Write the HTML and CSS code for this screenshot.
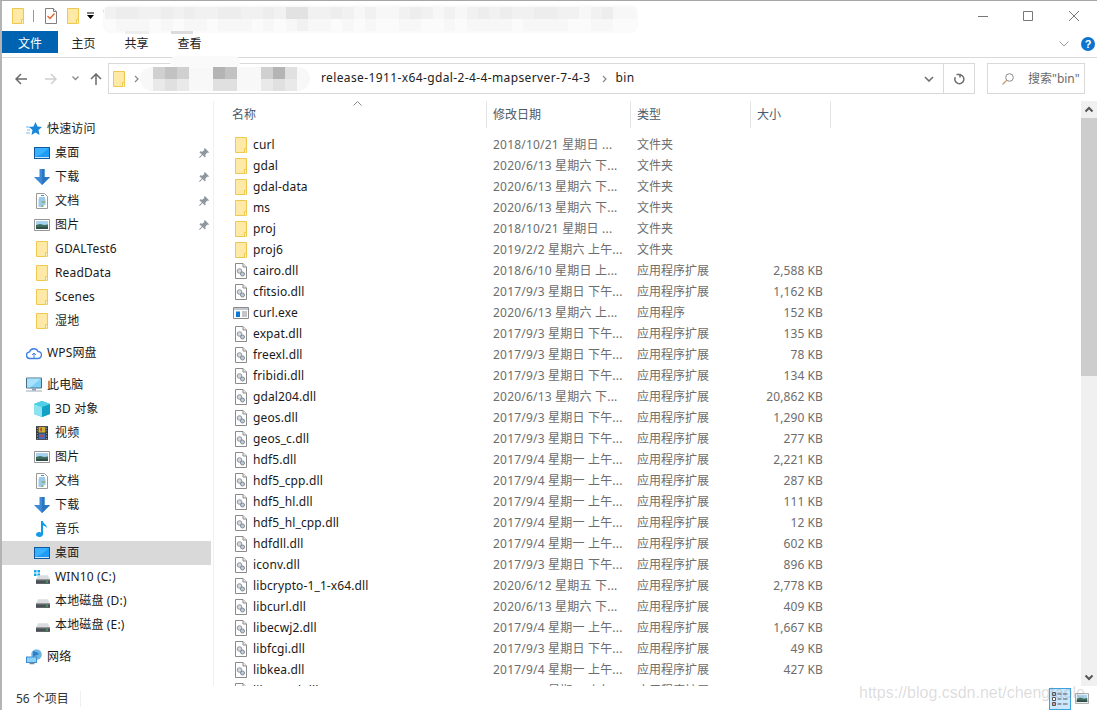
FILE: index.html
```html
<!DOCTYPE html>
<html lang="zh">
<head>
<meta charset="utf-8">
<title>bin</title>
<link rel="stylesheet" href="styles.css">
</head>
<body>
<svg class="defs" width="0" height="0">
  <symbol id="folder" viewBox="0 0 12 16"><path d="M.5.5h11v15H.5z" fill="#fee69a" stroke="#eec84f"/><path d="M1 1h9v14H1z" fill="#fee9a6"/><path d="M9.5 15.5v-4h2v4" fill="#fff3c8" stroke="#eec84f"/></symbol>
  <symbol id="dll" viewBox="0 0 12 16"><path d="M.5.5h7.5l3.5 3.5v11.5H.5z" fill="#fff" stroke="#8a8a8a"/><path d="M8 .5v3.5h3.5" fill="#eee" stroke="#8a8a8a"/><circle cx="4.5" cy="8" r="2.3" fill="#d5d9de" stroke="#8b97a3"/><circle cx="7.5" cy="11" r="2" fill="#c4ccd4" stroke="#7d8a96"/></symbol>
  <symbol id="exe" viewBox="0 0 16 12"><path d="M.5.5h15v11H.5z" fill="#fff" stroke="#8b8b8b"/><path d="M1 1h14v2H1z" fill="#c3c8cf"/><path d="M3 4.5h4v5.5H3z" fill="#0a78d7"/><path d="M9 5h5M9 7h5M9 9h5" stroke="#8b8b8b"/></symbol>
  <symbol id="desktop" viewBox="0 0 16 12"><path d="M0 0h16v12H0z" fill="#11599c"/><path d="M1 1h14v9H1z" fill="#1e9bf5"/><path d="M1 1h14L8 7 1 10z" fill="#39b1ff"/><path d="M1 10.5h14" stroke="#c9e8fb"/></symbol>
  <symbol id="down" viewBox="0 0 16 16"><path d="M5.500 0h5v8H16l-8 8-8-8h5.500z" fill="#3a8ad6"/><path d="M8 0h2.500v8H16l-8 8z" fill="#2a76c0"/></symbol>
  <symbol id="doc" viewBox="0 0 12 16"><path d="M.5.5h8l3 3v12H.5z" fill="#fff" stroke="#9a9a9a"/><path d="M5 2.500h3M3 5h6M2.500 7h7M2.500 9h7M2.500 11h7M2.500 13h5" stroke="#3c93cc"/><path d="M5.500 9h4M5.500 13h2" stroke="#6ba84a"/></symbol>
  <symbol id="pic" viewBox="0 0 16 12"><path d="M.5.5h15v11H.5z" fill="#fff" stroke="#969696"/><path d="M2 2h12v4H2z" fill="#a8d2ee"/><path d="M2 6l4-1 4 1 4-.5V10H2z" fill="#3f6d5c"/><path d="M2 8h12v2H2z" fill="#2f4f4a"/></symbol>
  <symbol id="star" viewBox="0 0 16 16"><path d="M9.500 1l2 4.500 4.500.5-3.500 3 1 5-4-2.500-4 2.500 1-5L3 6l4.500-.5z" fill="#1a86d9"/><path d="M0 6h4M1 9h3M0 12h4" stroke="#6dbcf2"/></symbol>
  <symbol id="cloud" viewBox="0 0 16 14"><path d="M4 12.500a3.300 3.300 0 0 1-.4-6.600A4.500 4.500 0 0 1 12 5.500a3.500 3.500 0 0 1 0 7z" fill="#fff" stroke="#3f7fe8" stroke-width="1.400"/><path d="M8 12V7M6 9l2-2 2 2" fill="none" stroke="#3f7fe8"/></symbol>
  <symbol id="pc" viewBox="0 0 16 15"><path d="M.5.500h15v10H.5z" fill="#7fd0f7" stroke="#4a6c87"/><path d="M1 1h14L4 10H1z" fill="#a8e2fb"/><path d="M6 11h4v2H6z" fill="#8aa0b2"/><path d="M0 13.500h16" stroke="#9aabb9"/></symbol>
  <symbol id="cube" viewBox="0 0 16 16"><path d="M8 0l8 3v10l-8 3-8-3V3z" fill="#29b6d6"/><path d="M8 6l8-3v10l-8 3z" fill="#12a0c4"/><path d="M0 3l8 3v10l-8-3z" fill="#8be3f0"/><path d="M8 0l8 3-8 3-8-3z" fill="#4fd0e6"/></symbol>
  <symbol id="film" viewBox="0 0 14 16"><path d="M0 0h14v16H0z" fill="#2f3337"/><path d="M3 1h8v6.500H3z" fill="#c8b13b"/><path d="M3 8.500h8V15H3z" fill="#3c6fc6"/><path d="M5 2h2v4H5zM5 10h3v3H5z" fill="#c5452f"/><path d="M1 2h1v1H1zm0 3h1v1H1zm0 3h1v1H1zm0 3h1v1H1zm0 3h1v1H1zm11-12h1v1h-1zm0 3h1v1h-1zm0 3h1v1h-1zm0 3h1v1h-1zm0 3h1v1h-1z" fill="#ddd"/></symbol>
  <symbol id="note" viewBox="0 0 12 16"><path d="M5 0h1.800c.3 3 4.200 3.500 4.200 7-1-1.500-2.700-2.300-4-2.500V13c0 1.800-1.500 3-3.500 3S0 15 0 13.500 1.500 11 3 11c.8 0 1.500.2 2 .5z" fill="#0f9be8"/></symbol>
  <symbol id="drive" viewBox="0 0 16 10"><path d="M2.500 0h11L16 5H0z" fill="#d9dde0"/><path d="M0 5h16v5H0z" fill="#4a5056"/><path d="M0 5h16v1H0z" fill="#8a9096"/><path d="M11.500 7h2v1.500h-2z" fill="#3fd05a"/></symbol>
  <symbol id="win" viewBox="0 0 6 6"><path d="M0 0h2.500v2.500H0zM3.500 0H6v2.500H3.500zM0 3.500h2.500V6H0zM3.500 3.500H6V6H3.500z" fill="#12a4ec"/></symbol>
  <symbol id="net" viewBox="0 0 16 16"><circle cx="10.500" cy="5.500" r="5.300" fill="#6fb4e6"/><path d="M7 2c2 1 4 .5 6 3-2 2-5 1-6 3z" fill="#2f7ec0"/><path d="M0 7.500h11V14H0z" fill="#3d8fd1"/><path d="M1 8.500h9V13H1z" fill="#8bd2f6"/><path d="M3.500 14.500h5" stroke="#6f8ba3" stroke-width="1.500"/></symbol>
  <symbol id="pin" viewBox="0 0 12 12"><path d="M7 0l5 5-1 1-1-.5L7.500 8 8 10.500 7 11.500 4.200 8.500 1 12 0 11l3.500-3.200L.5 5l1-1L4 4.500 6.500 2 6 1z" fill="#8e979f"/></symbol>
</svg>

<div class="watermark">https://blog.csdn.net/chengtaole</div>

<div class="window">
  <header class="titlebar">
    <div class="qat">
      <svg class="i12"><use href="#folder"/></svg>
      <span class="qat-sep"></span>
      <svg class="i12 qat-doc" viewBox="0 0 12 16"><path d="M.5.500h8l3 3v12H.5z" fill="#fff" stroke="#7f7f7f"/><path d="M8.500.5v3h3" fill="#eee" stroke="#7f7f7f"/><path d="M2.500 8l2.500 2.500 4.500-5" fill="none" stroke="#e8612c" stroke-width="1.400"/></svg>
      <svg class="i12 qat-folder"><use href="#folder"/></svg>
      <svg class="qat-arrow" viewBox="0 0 9 8"><path d="M1 1h7" stroke="#000"/><path d="M1 3h7L4.500 7z" fill="#000"/></svg>
      <span class="qat-sep last"></span>
    </div>
    <div class="winctl">
      <svg viewBox="0 0 10 10"><path d="M0 5.500h10" stroke="#777"/></svg>
      <svg viewBox="0 0 10 10"><path d="M.5.500h9v9h-9z" fill="none" stroke="#777"/></svg>
      <svg viewBox="0 0 10 10"><path d="M0 0l10 10M10 0L0 10" stroke="#777"/></svg>
    </div>
  </header>

  <nav class="ribbon">
    <span class="tab active">文件</span>
    <span class="tab">主页</span>
    <span class="tab">共享</span>
    <span class="tab">查看</span>
    <svg class="ribbon-chev" viewBox="0 0 10 6"><path d="M.5.500L5 5 9.500.5" fill="none" stroke="#9a9a9a"/></svg>
    <span class="help">?</span>
  </nav>

  <div class="navbar">
    <div class="navbtns">
      <svg class="nav-back" viewBox="0 0 12 12"><path d="M6 1L1 6l5 5M1 6h11" fill="none" stroke="#6a6a6a" stroke-width="1.500"/></svg>
      <svg class="nav-fwd" viewBox="0 0 12 12"><path d="M6 1l5 5-5 5M11 6H0" fill="none" stroke="#cfcfcf" stroke-width="1.500"/></svg>
      <svg class="nav-hist" viewBox="0 0 7 5"><path d="M.5.500L3.500 3.500 6.500.5" fill="none" stroke="#8a8a8a" stroke-width="1.300"/></svg>
      <svg class="nav-up" viewBox="0 0 12 12"><path d="M1 6l5-5 5 5M6 1v11" fill="none" stroke="#6a6a6a" stroke-width="1.500"/></svg>
    </div>
    <div class="address">
      <svg class="i12"><use href="#folder"/></svg>
      <svg class="crumb-chev first" viewBox="0 0 5 8"><path d="M1 1l3 3-3 3" fill="none" stroke="#888" stroke-width="1.200"/></svg>
      <span class="crumb">release-1911-x64-gdal-2-4-4-mapserver-7-4-3</span>
      <svg class="crumb-chev mid" viewBox="0 0 5 8"><path d="M1 1l3 3-3 3" fill="none" stroke="#888" stroke-width="1.200"/></svg>
      <span class="crumb last">bin</span>
      <svg class="addr-chev" viewBox="0 0 10 6"><path d="M1 1l4 4 4-4" fill="none" stroke="#6f6f6f" stroke-width="1.600"/></svg>
      <span class="refresh">
        <svg viewBox="0 0 12 12"><path d="M3.500 1.500h3.500v3M7 1.700a4.500 4.500 0 1 1-4.700 2.500" fill="none" stroke="#6f6f6f" stroke-width="1.500"/></svg>
      </span>
    </div>
    <div class="search">
      <svg viewBox="0 0 12 12"><circle cx="7.500" cy="4.500" r="3.800" fill="none" stroke="#8a8a8a"/><path d="M4.800 7.200L.5 11.500" stroke="#c79a73" stroke-width="1.200"/></svg>
      <span>搜索"bin"</span>
    </div>
  </div>

  <main class="main">
    <aside class="sidebar">
      <section class="navgroup">
        <div class="navrow top"><svg class="ni"><use href="#star"/></svg>快速访问</div>
        <div class="navrow"><svg class="ni short"><use href="#desktop"/></svg>桌面<svg class="pin"><use href="#pin"/></svg></div>
        <div class="navrow"><svg class="ni"><use href="#down"/></svg>下载<svg class="pin"><use href="#pin"/></svg></div>
        <div class="navrow"><svg class="ni narrow"><use href="#doc"/></svg>文档<svg class="pin"><use href="#pin"/></svg></div>
        <div class="navrow"><svg class="ni short"><use href="#pic"/></svg>图片<svg class="pin"><use href="#pin"/></svg></div>
        <div class="navrow"><svg class="ni narrow"><use href="#folder"/></svg>GDALTest6</div>
        <div class="navrow"><svg class="ni narrow"><use href="#folder"/></svg>ReadData</div>
        <div class="navrow"><svg class="ni narrow"><use href="#folder"/></svg>Scenes</div>
        <div class="navrow"><svg class="ni narrow"><use href="#folder"/></svg>湿地</div>
      </section>
      <section class="navgroup">
        <div class="navrow top"><svg class="ni"><use href="#cloud"/></svg>WPS网盘</div>
      </section>
      <section class="navgroup">
        <div class="navrow top"><svg class="ni"><use href="#pc"/></svg>此电脑</div>
        <div class="navrow"><svg class="ni"><use href="#cube"/></svg>3D 对象</div>
        <div class="navrow"><svg class="ni narrow"><use href="#film"/></svg>视频</div>
        <div class="navrow"><svg class="ni short"><use href="#pic"/></svg>图片</div>
        <div class="navrow"><svg class="ni narrow"><use href="#doc"/></svg>文档</div>
        <div class="navrow"><svg class="ni"><use href="#down"/></svg>下载</div>
        <div class="navrow"><svg class="ni narrow"><use href="#note"/></svg>音乐</div>
        <div class="navrow selected"><svg class="ni short"><use href="#desktop"/></svg>桌面</div>
        <div class="navrow"><span class="drive-wrap"><svg class="win"><use href="#win"/></svg><svg class="drv"><use href="#drive"/></svg></span>WIN10 (C:)</div>
        <div class="navrow"><span class="drive-wrap"><svg class="drv"><use href="#drive"/></svg></span>本地磁盘 (D:)</div>
        <div class="navrow"><span class="drive-wrap"><svg class="drv"><use href="#drive"/></svg></span>本地磁盘 (E:)</div>
      </section>
      <section class="navgroup">
        <div class="navrow top"><svg class="ni"><use href="#net"/></svg>网络</div>
      </section>
    </aside>

    <section class="files">
      <div class="fhead">
        <span class="fh name">名称</span>
        <span class="fh">修改日期</span>
        <span class="fh">类型</span>
        <span class="fh">大小</span>
        <svg class="sort" viewBox="0 0 9 5"><path d="M.5 4.500L4.500.5l4 4" fill="none" stroke="#8a8a8a"/></svg>
      </div>
      <div class="frows">
        <div class="row"><span class="n"><svg class="fi"><use href="#folder"/></svg>curl</span><span class="d">2018/10/21 星期日 ...</span><span class="t">文件夹</span><span class="s"></span></div>
        <div class="row"><span class="n"><svg class="fi"><use href="#folder"/></svg>gdal</span><span class="d">2020/6/13 星期六 下...</span><span class="t">文件夹</span><span class="s"></span></div>
        <div class="row"><span class="n"><svg class="fi"><use href="#folder"/></svg>gdal-data</span><span class="d">2020/6/13 星期六 下...</span><span class="t">文件夹</span><span class="s"></span></div>
        <div class="row"><span class="n"><svg class="fi"><use href="#folder"/></svg>ms</span><span class="d">2020/6/13 星期六 下...</span><span class="t">文件夹</span><span class="s"></span></div>
        <div class="row"><span class="n"><svg class="fi"><use href="#folder"/></svg>proj</span><span class="d">2018/10/21 星期日 ...</span><span class="t">文件夹</span><span class="s"></span></div>
        <div class="row"><span class="n"><svg class="fi"><use href="#folder"/></svg>proj6</span><span class="d">2019/2/2 星期六 上午...</span><span class="t">文件夹</span><span class="s"></span></div>
        <div class="row"><span class="n"><svg class="fi"><use href="#dll"/></svg>cairo.dll</span><span class="d">2018/6/10 星期日 上...</span><span class="t">应用程序扩展</span><span class="s">2,588 KB</span></div>
        <div class="row"><span class="n"><svg class="fi"><use href="#dll"/></svg>cfitsio.dll</span><span class="d">2017/9/3 星期日 下午...</span><span class="t">应用程序扩展</span><span class="s">1,162 KB</span></div>
        <div class="row"><span class="n"><svg class="fi wide"><use href="#exe"/></svg>curl.exe</span><span class="d">2020/6/13 星期六 上...</span><span class="t">应用程序</span><span class="s">152 KB</span></div>
        <div class="row"><span class="n"><svg class="fi"><use href="#dll"/></svg>expat.dll</span><span class="d">2017/9/3 星期日 下午...</span><span class="t">应用程序扩展</span><span class="s">135 KB</span></div>
        <div class="row"><span class="n"><svg class="fi"><use href="#dll"/></svg>freexl.dll</span><span class="d">2017/9/3 星期日 下午...</span><span class="t">应用程序扩展</span><span class="s">78 KB</span></div>
        <div class="row"><span class="n"><svg class="fi"><use href="#dll"/></svg>fribidi.dll</span><span class="d">2017/9/3 星期日 下午...</span><span class="t">应用程序扩展</span><span class="s">134 KB</span></div>
        <div class="row"><span class="n"><svg class="fi"><use href="#dll"/></svg>gdal204.dll</span><span class="d">2020/6/13 星期六 下...</span><span class="t">应用程序扩展</span><span class="s">20,862 KB</span></div>
        <div class="row"><span class="n"><svg class="fi"><use href="#dll"/></svg>geos.dll</span><span class="d">2017/9/3 星期日 下午...</span><span class="t">应用程序扩展</span><span class="s">1,290 KB</span></div>
        <div class="row"><span class="n"><svg class="fi"><use href="#dll"/></svg>geos_c.dll</span><span class="d">2017/9/3 星期日 下午...</span><span class="t">应用程序扩展</span><span class="s">277 KB</span></div>
        <div class="row"><span class="n"><svg class="fi"><use href="#dll"/></svg>hdf5.dll</span><span class="d">2017/9/4 星期一 上午...</span><span class="t">应用程序扩展</span><span class="s">2,221 KB</span></div>
        <div class="row"><span class="n"><svg class="fi"><use href="#dll"/></svg>hdf5_cpp.dll</span><span class="d">2017/9/4 星期一 上午...</span><span class="t">应用程序扩展</span><span class="s">287 KB</span></div>
        <div class="row"><span class="n"><svg class="fi"><use href="#dll"/></svg>hdf5_hl.dll</span><span class="d">2017/9/4 星期一 上午...</span><span class="t">应用程序扩展</span><span class="s">111 KB</span></div>
        <div class="row"><span class="n"><svg class="fi"><use href="#dll"/></svg>hdf5_hl_cpp.dll</span><span class="d">2017/9/4 星期一 上午...</span><span class="t">应用程序扩展</span><span class="s">12 KB</span></div>
        <div class="row"><span class="n"><svg class="fi"><use href="#dll"/></svg>hdfdll.dll</span><span class="d">2017/9/4 星期一 上午...</span><span class="t">应用程序扩展</span><span class="s">602 KB</span></div>
        <div class="row"><span class="n"><svg class="fi"><use href="#dll"/></svg>iconv.dll</span><span class="d">2017/9/3 星期日 下午...</span><span class="t">应用程序扩展</span><span class="s">896 KB</span></div>
        <div class="row"><span class="n"><svg class="fi"><use href="#dll"/></svg>libcrypto-1_1-x64.dll</span><span class="d">2020/6/12 星期五 下...</span><span class="t">应用程序扩展</span><span class="s">2,778 KB</span></div>
        <div class="row"><span class="n"><svg class="fi"><use href="#dll"/></svg>libcurl.dll</span><span class="d">2020/6/13 星期六 下...</span><span class="t">应用程序扩展</span><span class="s">409 KB</span></div>
        <div class="row"><span class="n"><svg class="fi"><use href="#dll"/></svg>libecwj2.dll</span><span class="d">2017/9/4 星期一 上午...</span><span class="t">应用程序扩展</span><span class="s">1,667 KB</span></div>
        <div class="row"><span class="n"><svg class="fi"><use href="#dll"/></svg>libfcgi.dll</span><span class="d">2017/9/3 星期日 下午...</span><span class="t">应用程序扩展</span><span class="s">49 KB</span></div>
        <div class="row"><span class="n"><svg class="fi"><use href="#dll"/></svg>libkea.dll</span><span class="d">2017/9/4 星期一 上午...</span><span class="t">应用程序扩展</span><span class="s">427 KB</span></div>
        <div class="row"><span class="n"><svg class="fi"><use href="#dll"/></svg>libmysql.dll</span><span class="d">2017/9/4 星期一 上午...</span><span class="t">应用程序扩展</span><span class="s">1,640 KB</span></div>
      </div>
    </section>

    <div class="scrollbar">
      <svg class="sb-btn" viewBox="0 0 16 17"><path d="M4.500 10.500L8 7l3.500 3.500" fill="none" stroke="#555" stroke-width="2"/></svg>
      <div class="sb-thumb"></div>
      <div class="sb-track"></div>
      <svg class="sb-btn" viewBox="0 0 16 17"><path d="M4.500 6.500L8 10l3.500-3.500" fill="none" stroke="#555" stroke-width="2"/></svg>
    </div>
  </main>

  <footer class="status">
    <span class="count">56 个项目</span>
    <span class="st-sep"></span>
    <span class="viewbtn on">
      <svg viewBox="0 0 16 16"><path d="M.5 1.500h3v3h-3zM.5 6.500h3v3h-3zM.5 11.500h3v3h-3z" fill="#fff" stroke="#555"/><path d="M1 2.500h2v1H1z" fill="#4a7fb5"/><path d="M1 12.500h2v1H1z" fill="#c0392b"/><path d="M5.500 3h4M11 3h4.500M5.500 8h4M11 8h4.500M5.500 13h4M11 13h4.500" stroke="#555"/></svg>
    </span>
    <svg class="viewbtn2"><use href="#pic"/></svg>
  </footer>
</div>

<div class="smudge title-smudge">
  <i class="g2"></i><i class="g3"></i><i class="g3"></i><i class="g2"></i><i class="g2"></i><i class="g3"></i><i class="g2"></i><i class="g3"></i><i class="g2"></i><i class="g2"></i><i class="g3"></i><i class="g3"></i><i class="g2"></i><i class="g2"></i><i class="g3"></i><i class="g2"></i><i class="g4"></i><i class="g4"></i><i class="g2"></i><i class="g2"></i><i class="g3"></i><i class="g2"></i><i class="g1"></i><i class="g2"></i><i class="g1"></i><i class="g1"></i><i class="g2"></i><i class="g3"></i><i class="g2"></i><i class="g1"></i><i class="g2"></i><i class="g1"></i><i class="g2"></i><i class="g3"></i><i class="g2"></i><i class="g3"></i><i class="g2"></i><i class="g2"></i><i class="g3"></i><i class="g3"></i><i class="g2"></i><i class="g2"></i><i class="g1"></i><i class="g2"></i><i class="g3"></i><i class="g1"></i><i class="g1"></i>
  <i class="g0"></i><i class="g1"></i><i class="g1"></i><i class="g1"></i><i class="g0"></i><i class="g1"></i><i class="g0"></i><i class="g1"></i><i class="g1"></i><i class="g0"></i><i class="g1"></i><i class="g1"></i><i class="g1"></i><i class="g0"></i><i class="g1"></i><i class="g0"></i><i class="g1"></i><i class="g2"></i><i class="g1"></i><i class="g1"></i><i class="g0"></i><i class="g1"></i><i class="g0"></i><i class="g1"></i><i class="g0"></i><i class="g0"></i><i class="g1"></i><i class="g1"></i><i class="g0"></i><i class="g0"></i><i class="g1"></i><i class="g0"></i><i class="g1"></i><i class="g1"></i><i class="g1"></i><i class="g1"></i><i class="g0"></i><i class="g1"></i><i class="g1"></i><i class="g1"></i><i class="g1"></i><i class="g0"></i><i class="g0"></i><i class="g1"></i><i class="g1"></i><i class="g0"></i><i class="g0"></i>
</div>
<span class="tabmark mark-a"></span>
<span class="tabmark mark-b"></span>

<div class="blur-a"></div>
<div class="blur-b"></div>
<div class="mosaic mo-a"><i class="k3"></i><i class="k4"></i><i class="k3"></i><i class="k1"></i><i class="k2"></i><i class="k1"></i></div>
<div class="mosaic two mo-b"><i class="k5"></i><i class="k4"></i><i class="k2"></i><i class="k2"></i></div>
<div class="mosaic mo-c"><i class="k3"></i><i class="k5"></i><i class="k2"></i><i class="k1"></i><i class="k2"></i><i class="k1"></i></div>
</body>
</html>
```

FILE: styles.css
```css
* { box-sizing: border-box; }
html, body { margin: 0; padding: 0; height: 100%; overflow: hidden; background: #fff; }
body {
  position: relative;
  font: 12px/16px "Noto Sans", "Noto Sans CJK SC", sans-serif;
  color: #1a1a1a;
}
.defs { position: absolute; }
svg { display: block; flex: none; }

.window {
  height: 710px;
  display: flex;
  flex-direction: column;
  border-top: 1px solid #a6a6a6;
  border-left: 2px solid #b4b4b4;
}

/* title bar */
.titlebar { height: 30px; flex: none; display: flex; align-items: center; justify-content: space-between; }
.qat { display: flex; align-items: center; padding-left: 10px; }
.i12 { width: 12px; height: 16px; }
.qat-sep { width: 1px; height: 12px; background: #9a9a9a; margin-left: 9px; }
.qat-sep.last { margin-left: 8px; }
.qat-doc { margin-left: 11px; }
.qat-folder { margin-left: 10px; }
.qat-arrow { width: 9px; height: 8px; margin-left: 7px; }
.winctl { display: flex; align-items: center; gap: 35px; padding-right: 18px; }
.winctl svg { width: 10px; height: 10px; }
.winctl svg:nth-child(2) { margin-right: 1px; }

/* ribbon */
.ribbon {
  height: 27px; flex: none;
  display: flex; align-items: flex-start;
  border-bottom: 1px solid #dadada;
}
.tab { width: 53px; height: 22px; line-height: 26px; text-align: center; color: #222; }
.tab.active { width: 56px; background: #0063b1; color: #fff; margin-right: -1px; }
.ribbon-chev { width: 10px; height: 6px; margin: 10px 0 0 auto; }
.help {
  width: 14px; height: 14px; border-radius: 50%;
  margin: 6px 2px 0 12px;
  background: #0b74cf; color: #fff;
  font: bold 11px/14px "Liberation Sans", sans-serif; text-align: center;
}

/* nav / address */
.navbar { height: 43px; flex: none; display: flex; padding-top: 5px; }
.navbtns { width: 106px; height: 31px; display: flex; align-items: center; padding-left: 13px; }
.nav-back, .nav-fwd, .nav-up { width: 12px; height: 12px; }
.nav-fwd { margin-left: 18px; }
.nav-hist { width: 7px; height: 5px; margin-left: 15px; }
.nav-up { margin-left: 11px; }
.address {
  width: 867px; height: 31px;
  display: flex; align-items: center;
  border: 1px solid #d9d9d9;
  padding-left: 4px; color: #222;
}
.crumb { letter-spacing: .38px; margin-bottom: 2px; }
.crumb-chev { width: 5px; height: 8px; margin-left: 9px; }
.crumb-chev.first { margin-right: 182px; }
.crumb-chev.mid { margin-left: 11px; }
.crumb.last { margin-left: 9px; }
.addr-chev { width: 10px; height: 6px; margin-left: auto; }
.refresh {
  width: 31px; height: 29px; margin-left: 9px;
  border-left: 1px solid #d9d9d9;
  display: flex; align-items: center; justify-content: center;
}
.refresh svg { width: 12px; height: 12px; }
.search {
  width: 98px; height: 31px; margin-left: 12px;
  display: flex; align-items: center;
  border: 1px solid #d9d9d9;
  padding-left: 14px; color: #6a6a6a;
}
.search svg { width: 12px; height: 12px; margin-right: 14px; }

/* main */
.main { flex: 1; min-height: 0; display: flex; }
.sidebar {
  width: 212px; flex: none;
  padding-top: 16px;
  border-right: 1px solid #f0f0f0;
  overflow: hidden;
}
.navgroup { margin-bottom: 8px; }
.navrow {
  height: 24px; display: flex; align-items: center;
  padding-left: 32px; margin-right: 2px; color: #1a1a1a;
  letter-spacing: .15px;
}
.navrow.top { padding-left: 24px; }
.navrow.selected { background: #d9d9d9; }
.ni { width: 16px; height: 16px; margin-right: 5px; }
.ni.short { height: 12px; }
.ni.narrow { width: 12px; margin: 0 7px 0 2px; }
.pin { width: 10px; height: 10px; margin-left: auto; margin-right: 2px; }
.drive-wrap { position: relative; width: 16px; height: 16px; margin-right: 5px; }
.drv { width: 14px; height: 9px; position: absolute; left: 2px; bottom: 1px; }
.win { width: 6px; height: 6px; position: absolute; left: 0; top: 1px; }

/* file list */
.files { flex: 1; min-width: 0; overflow: hidden; }
.fhead {
  position: relative;
  height: 27px;
  display: grid; grid-template-columns: 273px 144px 120px 80px;
  color: #4c5a6a;
}
.fh { border-right: 1px solid #e5e5e5; padding-left: 6px; line-height: 27px; }
.fh.name { padding-left: 18px; }
.sort { position: absolute; left: 139px; top: 0; width: 9px; height: 5px; }
.frows { padding-top: 6px; }
.row {
  height: 21px;
  display: grid; grid-template-columns: 273px 144px 120px 80px;
  align-items: center; color: #6d6d6d;
}
.n { display: flex; align-items: center; padding-left: 21px; color: #1a1a1a; letter-spacing: .12px; }
.fi { width: 12px; height: 16px; margin-right: 6px; }
.fi.wide { width: 16px; height: 12px; margin: 0 4px 0 -2px; }
.d, .t { padding-left: 6px; white-space: nowrap; }
.d { letter-spacing: .2px; }
.s { text-align: right; padding-right: 8px; white-space: nowrap; letter-spacing: .1px; }

/* scrollbar */
.scrollbar { width: 16px; flex: none; display: flex; flex-direction: column; background: #f0f0f0; }
.sb-btn { width: 16px; height: 17px; }
.sb-thumb { height: 258px; background: #cdcdcd; }
.sb-track { flex: 1; }

/* status */
.status { height: 24px; flex: none; display: flex; align-items: center; padding-left: 14px; padding-top: 1px; color: #333; }
.count { width: 64px; padding-top: 1px; }
.st-sep { width: 1px; height: 16px; background: #f0f0f0; }
.viewbtn {
  width: 22px; height: 22px; margin-left: auto;
  display: flex; align-items: center; justify-content: center;
  background: #cce8ff; border: 1px solid #3aa2dc;
}
.viewbtn svg { width: 16px; height: 16px; }
.viewbtn2 { width: 14px; height: 11px; margin: 0 8px 0 4px; }

/* watermark and blur over the screenshot */
.watermark {
  position: absolute; left: 859px; top: 683px; z-index: 5;
  font: 16px/20px "Liberation Sans", sans-serif;
  color: rgba(130, 130, 130, .28);
  white-space: nowrap;
}
.smudge {
  position: absolute; left: 105px; top: 7px;
  display: grid; grid-template-columns: repeat(47, 11.300px); grid-auto-rows: 12px;
  border-radius: 6px;
  box-shadow: 0 0 0 2px #fafafa;
}
.g0 { background: #fbfbfb; } .g1 { background: #f7f7f7; } .g2 { background: #f1f1f1; }
.g3 { background: #ededed; } .g4 { background: #e2e2e2; }
.tabmark { position: absolute; top: 31px; height: 3px; background: #dcdcdc; }
.mark-a { left: 125px; width: 24px; background: #eee; }
.mark-b { left: 171px; width: 22px; }
.blur-a, .blur-b { position: absolute; background: #f8f8f8; border-radius: 18px; }
.blur-a { left: 140px; top: 67px; width: 170px; height: 24px; }
.blur-b { left: 170px; top: 56px; width: 70px; height: 12px; background: #fafafa; }
.mosaic {
  position: absolute; top: 67px;
  display: grid; grid-template-columns: repeat(3, 12px); grid-auto-rows: 12px;
}
.mosaic.two { grid-template-columns: repeat(2, 12px); }
.mo-a { left: 153px; }
.mo-b { left: 213px; }
.mo-c { left: 261px; }
.k1 { background: #e9e9e9; } .k2 { background: #e0e0e0; } .k3 { background: #d0d0d0; }
.k4 { background: #c2c2c2; } .k5 { background: #b4b4b4; }
```
